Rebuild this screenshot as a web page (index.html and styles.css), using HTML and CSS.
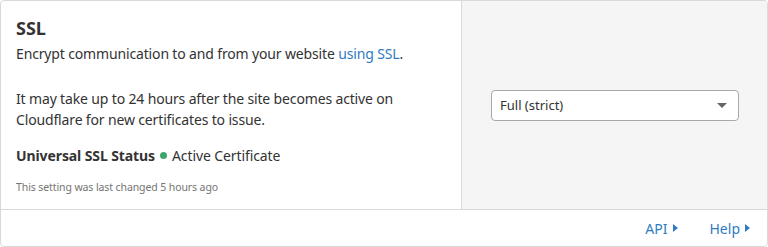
FILE: index.html
```html
<!DOCTYPE html>
<html lang="en">
<head>
  <meta charset="UTF-8">
  <title>SSL</title>
  <link rel="stylesheet" href="styles.css">
</head>
<body>
  <div class="card">
    <div class="card-body">
      <div class="card-main">
        <h2 class="card-title">SSL</h2>
        <p class="card-text">Encrypt communication to and from your website <a href="#" class="link">using SSL</a>.</p>
        <p class="card-text spaced">It may take up to 24 hours after the site becomes active on Cloudflare for new certificates to issue.</p>
        <div class="status">
          <strong>Universal SSL Status</strong>
          <span class="dot"></span>
          <span>Active Certificate</span>
        </div>
        <div class="changed">This setting was last changed 5 hours ago</div>
      </div>
      <div class="card-side">
        <div class="select">
          <span>Full (strict)</span>
          <span class="caret"></span>
        </div>
      </div>
    </div>
    <div class="card-footer">
      <a href="#" class="footer-link">API <span class="tri"></span></a>
      <a href="#" class="footer-link">Help <span class="tri"></span></a>
    </div>
  </div>
</body>
</html>
```

FILE: styles.css
```css
:root {
  --text: #333333;
  --muted: #747474;
  --blue: #2f7bbf;
  --border: #d9d9d9;
  --side-bg: #f5f5f5;
}

* {
  margin: 0;
  padding: 0;
  box-sizing: border-box;
}

body {
  font-family: "Noto Sans", "Open Sans", sans-serif;
  color: var(--text);
  background: #ffffff;
}

.card {
  width: 768px;
  height: 247px;
  border: 1px solid var(--border);
  border-radius: 4px;
  display: flex;
  flex-direction: column;
  overflow: hidden;
}

.card-body {
  display: flex;
  height: 209px;
  border-bottom: 1px solid var(--border);
}

.card-main {
  width: 460px;
  padding: 16px 15px 0 15px;
}

.card-title {
  font-size: 18px;
  font-weight: 700;
  line-height: 22px;
  margin-bottom: 4px;
}

.card-text {
  font-size: 14px;
  line-height: 21px;
  letter-spacing: -0.15px;
}

.card-text.spaced {
  margin-top: 24px;
}

.link {
  color: var(--blue);
  text-decoration: none;
}

.status {
  display: flex;
  align-items: center;
  gap: 5px;
  font-size: 14px;
  line-height: 21px;
  margin-top: 15px;
  letter-spacing: -0.1px;
}

.dot {
  width: 7px;
  height: 7px;
  border-radius: 50%;
  background: #3fa66b;
}

.changed {
  font-size: 10.5px;
  color: var(--muted);
  margin-top: 14px;
  letter-spacing: -0.1px;
}

.card-side {
  flex: 1;
  background: var(--side-bg);
  border-left: 1px solid var(--border);
  display: flex;
  align-items: center;
  padding: 0 28px 0 29px;
}

.select {
  width: 100%;
  height: 31px;
  background: #ffffff;
  border: 1px solid #a8a8a8;
  border-radius: 4px;
  display: flex;
  align-items: center;
  justify-content: space-between;
  padding: 0 11px 0 8px;
  font-size: 13px;
}

.caret {
  width: 0;
  height: 0;
  border-left: 5px solid transparent;
  border-right: 5px solid transparent;
  border-top: 5px solid #666666;
}

.card-footer {
  flex: 1;
  display: flex;
  justify-content: flex-end;
  align-items: center;
  gap: 32px;
  padding-right: 17px;
}

.footer-link {
  color: var(--blue);
  text-decoration: none;
  font-size: 14px;
  display: inline-flex;
  align-items: center;
  gap: 5px;
}

.tri {
  width: 0;
  height: 0;
  border-top: 4px solid transparent;
  border-bottom: 4px solid transparent;
  border-left: 5px solid var(--blue);
}
```
